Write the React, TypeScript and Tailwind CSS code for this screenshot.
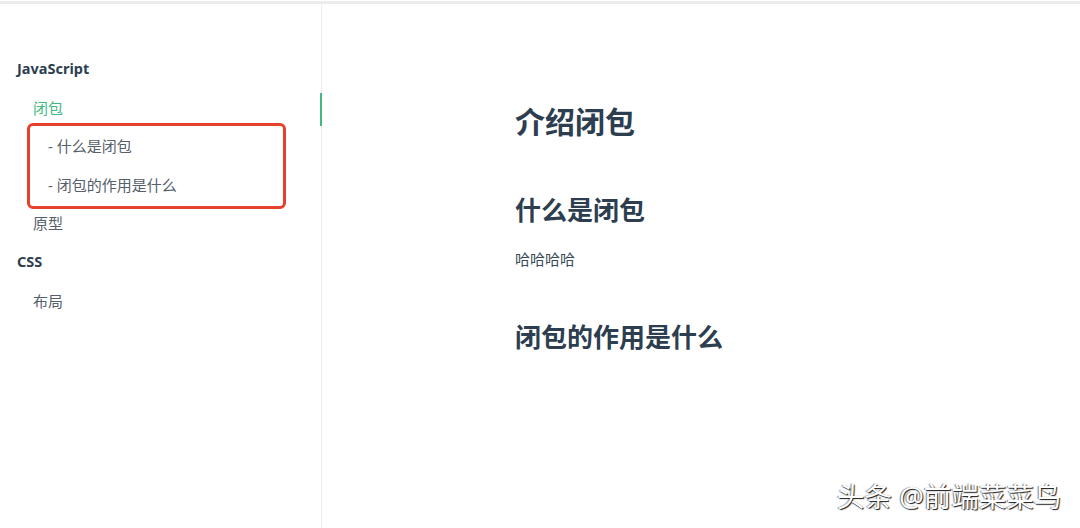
import React from "react";

const font = { fontFamily: '"Noto Sans", "Noto Sans CJK SC", sans-serif' };

function Row({ children, className }: { children: React.ReactNode; className: string }) {
  return <div className={`h-[38.6px] flex items-center ${className}`}>{children}</div>;
}

export default function App() {
  return (
    <div className="relative w-[1080px] h-[528px] bg-white overflow-hidden" style={font}>
      <div className="h-[1px]" />
      <div className="h-[3px] bg-[#ececec]" />
      <div className="flex h-[524px]">
        <aside className="relative w-[322px] shrink-0 border-r border-[#eaecef] pt-[46px]">
          <Row className="pl-[17px] text-[14.5px] font-bold text-[#2c3e50]">JavaScript</Row>
          <Row className="pl-[33px] text-[15px] text-[#42b983]">闭包</Row>
          <div className="relative">
            <div className="absolute left-[27px] top-[-4px] w-[259px] h-[86px] border-[3px] border-[#e5412d] rounded-[6px]" />
            <Row className="pl-[48px] text-[15px] text-[#55606b]">- 什么是闭包</Row>
            <Row className="pl-[48px] text-[15px] text-[#55606b]">- 闭包的作用是什么</Row>
          </div>
          <Row className="pl-[33px] text-[15px] text-[#55606b]">原型</Row>
          <Row className="pl-[17px] text-[14.5px] font-bold text-[#2c3e50]">CSS</Row>
          <Row className="pl-[33px] text-[15px] text-[#55606b]">布局</Row>
          <div className="absolute right-[-1px] top-[89px] w-[2px] h-[33px] bg-[#42b983]" />
        </aside>
        <main className="flex-1 pl-[193px] pt-[96px] text-[#2c3e50]">
          <h1 className="text-[30px] font-bold leading-[44px]">介绍闭包</h1>
          <h2 className="mt-[46px] text-[26px] font-bold leading-[40px]">什么是闭包</h2>
          <p className="mt-[19px] text-[15px] leading-[20px] text-[#3a4a5a]">哈哈哈哈</p>
          <h3 className="mt-[48px] text-[26px] font-bold leading-[40px]">闭包的作用是什么</h3>
        </main>
      </div>
      <div className="absolute left-[837px] top-[480px] text-[27.5px] leading-[34px] text-white [text-shadow:1px_1px_1px_rgba(0,0,0,0.9),-1px_0_1px_rgba(0,0,0,0.5)]">
        头条 @前端菜菜鸟
      </div>
    </div>
  );
}
